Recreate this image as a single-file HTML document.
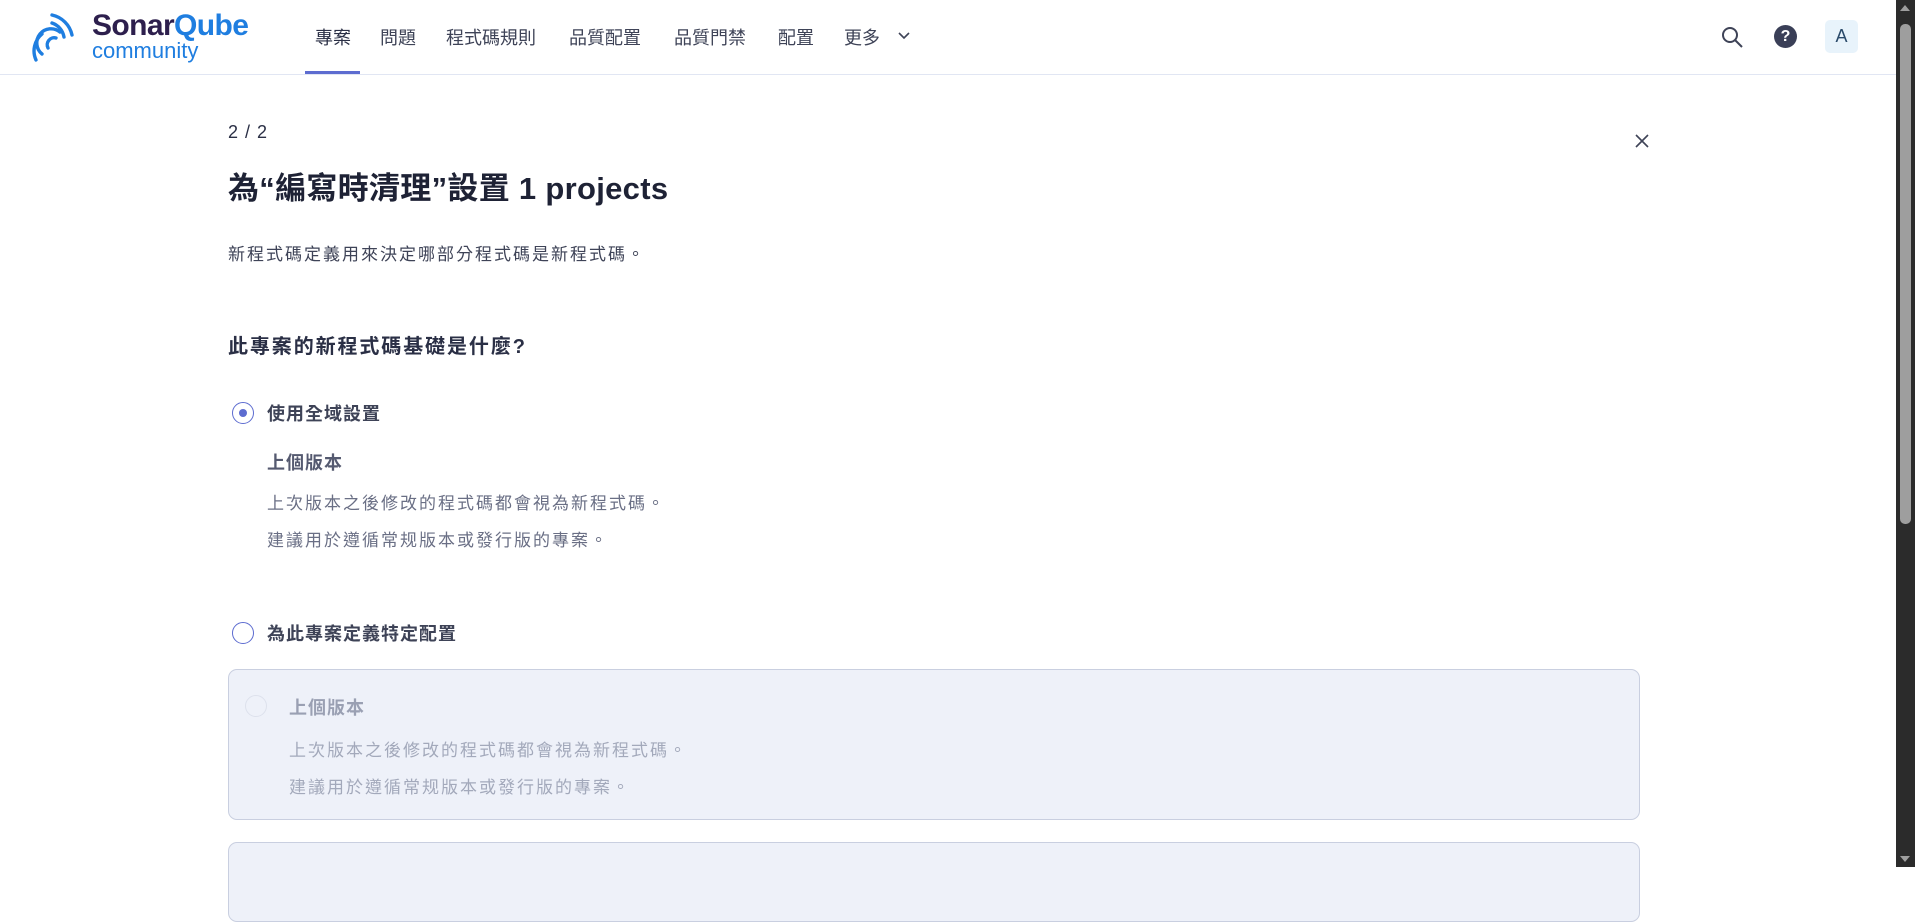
<!DOCTYPE html>
<html><head><meta charset="utf-8"><style>
*{box-sizing:border-box;margin:0;padding:0}
body{width:1915px;height:867px;overflow:hidden;background:#fff;font-family:"Liberation Sans","Noto Sans CJK TC",sans-serif;color:#2a2f45;position:relative}
.abs{position:absolute;white-space:nowrap}
.hdr{position:absolute;left:0;top:0;width:1896px;height:75px;border-bottom:1px solid #e1e6f3}
.nav{position:absolute;top:24px;font-size:18px;color:#3e4357}
.sb{position:absolute;right:0;top:0;width:19px;height:867px;background:#2b2b2b}
.radio{position:absolute;width:22px;height:22px;border-radius:50%;border:1.5px solid #5d6cd0;background:#fff}
.box{position:absolute;left:228px;width:1412px;border:1px solid #c9cfe0;border-radius:9px;background:#eef1f9}
.t{font-size:17px;letter-spacing:2px}
.l{letter-spacing:1px}
</style></head><body>
<div class="hdr">
 <svg class="abs" style="left:32px;top:10px" width="48" height="52" viewBox="0 0 48 52" fill="none" stroke="#1f7ee0" stroke-width="3.4" stroke-linecap="round">
  <path d="M16 38 a7 7 0 0 1 8 -10"/><path d="M10 44 a14 14 0 0 1 18 -22"/><path d="M4 50 a22 22 0 0 1 6 -26"/><path d="M20 5 a26 26 0 0 1 20 20"/><path d="M20 13 a18 18 0 0 1 12 14"/>
 </svg>
 <div class="abs" style="left:92px;top:9px;font-size:30px;font-weight:bold;letter-spacing:-0.6px"><span style="color:#2d1f4d">Sonar</span><span style="color:#1f7ee0">Qube</span></div>
 <div class="abs" style="left:92px;top:38px;font-size:22px;color:#1f7ee0">community</div>
 <div class="nav abs" style="left:315px;color:#2a2f45">專案</div>
 <div class="abs" style="left:305px;top:71px;width:55px;height:3px;background:#5d6cd0"></div>
 <div class="nav abs" style="left:380px">問題</div>
 <div class="nav abs" style="left:446px">程式碼規則</div>
 <div class="nav abs" style="left:569px">品質配置</div>
 <div class="nav abs" style="left:674px">品質門禁</div>
 <div class="nav abs" style="left:778px">配置</div>
 <div class="nav abs" style="left:844px">更多</div>
 <svg class="abs" style="left:897px;top:31px" width="14" height="10" viewBox="0 0 14 10"><path d="M2 2 L7 7 L12 2" stroke="#3e4357" stroke-width="1.6" fill="none"/></svg>
 <svg class="abs" style="left:1720px;top:25px" width="24" height="24" viewBox="0 0 24 24" fill="none" stroke="#3e4357" stroke-width="2"><circle cx="10" cy="10" r="7"/><path d="M15 15 L22 22"/></svg>
 <div class="abs" style="left:1774px;top:25px;width:23px;height:23px;border-radius:50%;background:#3a3f57;color:#fff;font-weight:bold;font-size:16px;text-align:center;line-height:23px">?</div>
 <div class="abs" style="left:1825px;top:20px;width:33px;height:33px;border-radius:5px;background:#e8f3fb;color:#2a4a6a;font-size:18px;text-align:center;line-height:33px">A</div>
</div>
<div class="sb"><div style="position:absolute;left:4px;top:24px;width:11px;height:500px;background:#9e9e9e;border-radius:5px"></div>
<div style="position:absolute;left:4px;top:5px;border-left:5px solid transparent;border-right:5px solid transparent;border-bottom:6px solid #9e9e9e"></div>
<div style="position:absolute;left:4px;bottom:5px;border-left:5px solid transparent;border-right:5px solid transparent;border-top:6px solid #9e9e9e"></div></div>

<div class="abs" style="left:228px;top:122px;font-size:18px;color:#2a2f45;letter-spacing:1px">2 / 2</div>
<svg class="abs" style="left:1634px;top:133px" width="16" height="16" viewBox="0 0 16 16"><path d="M2 2 L14 14 M14 2 L2 14" stroke="#3e4357" stroke-width="1.6"/></svg>
<div class="abs" style="left:228px;top:163px;font-size:31px;font-weight:bold;color:#1e2235;letter-spacing:0.3px">為“編寫時清理”設置 1 projects</div>
<div class="abs t" style="left:228px;top:240px;color:#3e4357">新程式碼定義用來決定哪部分程式碼是新程式碼。</div>
<div class="abs" style="left:228px;top:330px;font-size:20px;font-weight:bold;color:#2a2f45;letter-spacing:1.9px">此專案的新程式碼基礎是什麼?</div>

<div class="radio" style="left:232px;top:402px"><div style="position:absolute;left:5.5px;top:5.5px;width:8px;height:8px;border-radius:50%;background:#5d6cd0"></div></div>
<div class="abs l" style="left:267px;top:400px;font-size:18px;font-weight:bold;color:#3e4357">使用全域設置</div>
<div class="abs l" style="left:267px;top:449px;font-size:18px;font-weight:bold;color:#555a70">上個版本</div>
<div class="abs t" style="left:267px;top:489px;color:#6a6f85">上次版本之後修改的程式碼都會視為新程式碼。</div>
<div class="abs t" style="left:267px;top:526px;color:#6a6f85">建議用於遵循常规版本或發行版的專案。</div>

<div class="radio" style="left:232px;top:622px"></div>
<div class="abs l" style="left:267px;top:620px;font-size:18px;font-weight:bold;color:#3e4357">為此專案定義特定配置</div>

<div class="box" style="top:669px;height:151px">
 <div class="radio" style="left:16px;top:25px;border-color:#dde1ec;background:#eef1f9"></div>
 <div class="abs l" style="left:60px;top:24px;font-size:18px;font-weight:bold;color:#9aa0b3">上個版本</div>
 <div class="abs t" style="left:60px;top:66px;color:#a3a9bb">上次版本之後修改的程式碼都會視為新程式碼。</div>
 <div class="abs t" style="left:60px;top:103px;color:#a3a9bb">建議用於遵循常规版本或發行版的專案。</div>
</div>
<div class="box" style="top:842px;height:80px"></div>
</body></html>
